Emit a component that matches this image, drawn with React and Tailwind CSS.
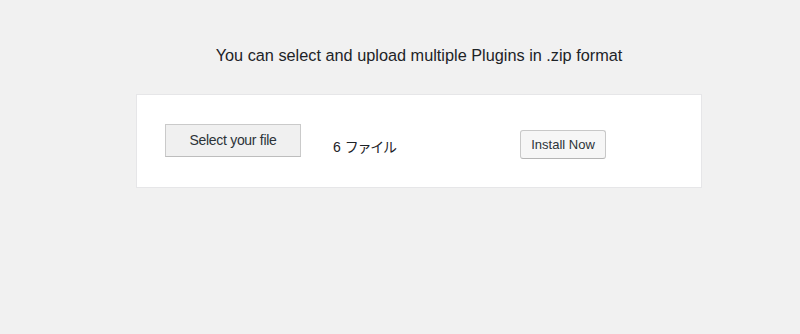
import React from 'react'

const App = () => {
  return (
    <div className="min-h-[334px] w-[800px] bg-[#f1f1f1] font-['Liberation_Sans','Noto_Sans_CJK_JP',sans-serif] text-[#1d2327]">
      <div className="ml-[136px] w-[566px] pt-[43px]">
        <p className="text-center text-[16.3px] leading-[24px]">
          You can select and upload multiple Plugins in .zip format
        </p>
        <div className="mt-[27px] flex h-[94px] items-start border border-[#e6e6e8] bg-white pl-[28px]">
          <button
            type="button"
            className="mt-[29px] h-[33px] w-[136px] border border-[#cacaca] border-b-[#bdbdbd] bg-[#f0f0f0] text-[14px] tracking-[-0.3px] text-[#2c3338]"
          >
            Select your file
          </button>
          <span className="ml-[32px] mt-[42px] w-[187px] text-[14px] leading-[20px] text-[#1d2327]">
            6 <span className="tracking-[-1.2px]">ファイル</span>
          </span>
          <button
            type="button"
            className="mt-[35px] h-[29px] w-[86px] rounded-[3px] border border-[#c8c8c8] border-b-[#b5b5b5] bg-[#f6f6f6] text-[13px] text-[#2c3338]"
          >
            Install Now
          </button>
        </div>
      </div>
    </div>
  )
}

export default App
